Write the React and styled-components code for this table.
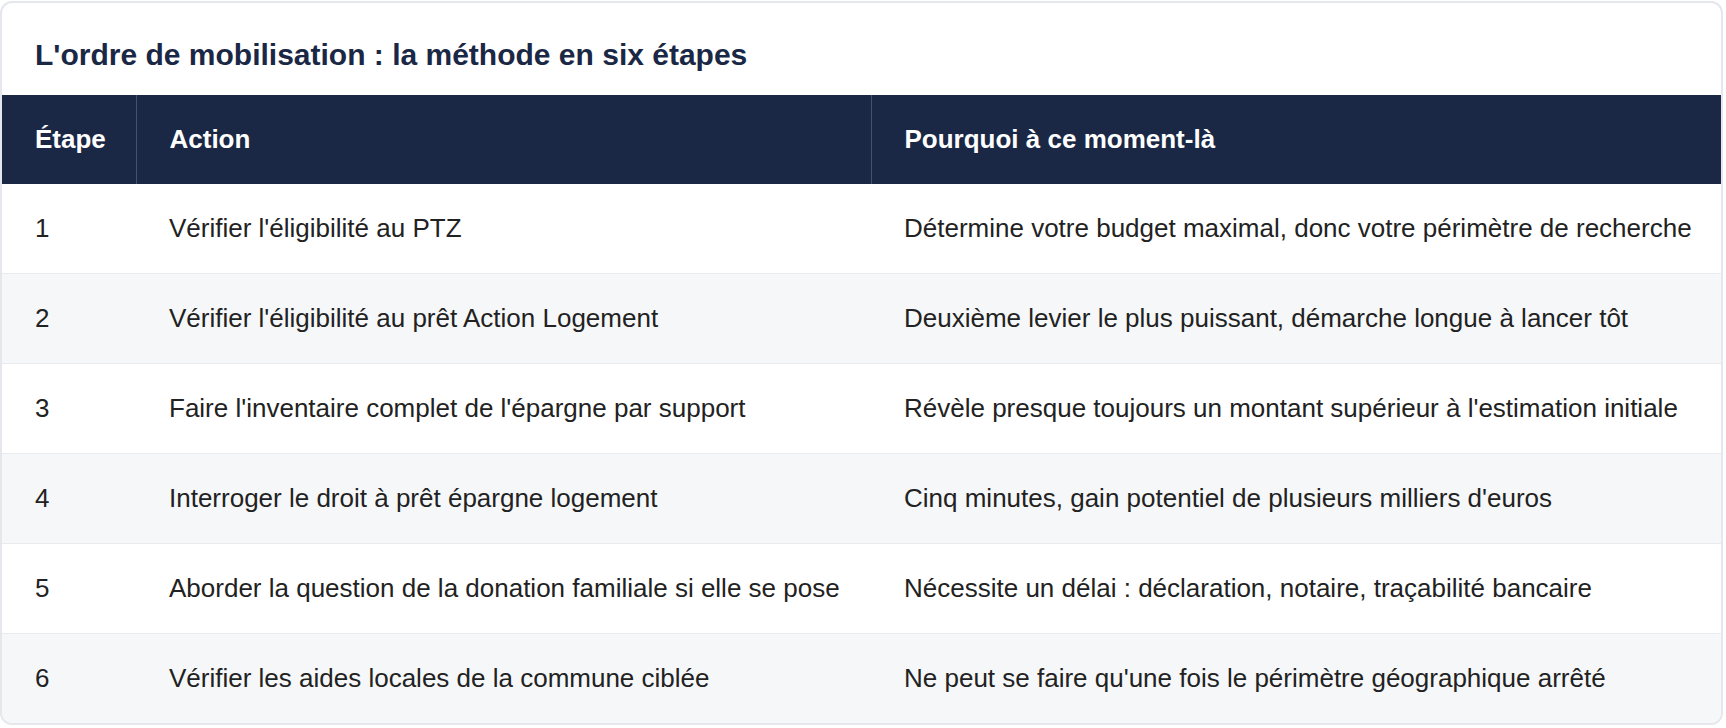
import styled, { createGlobalStyle } from "styled-components";

const GlobalStyle = createGlobalStyle`
  html, body {
    margin: 0;
    padding: 0;
    background: #ffffff;
  }
  body {
    font-family: "Liberation Sans", Arial, sans-serif;
  }
`;

const Card = styled.section`
  margin: 1px 3px 0 0;
  border: 2px solid #e4e7eb;
  border-radius: 12px;
  overflow: hidden;
  background: #fff;
`;

const Title = styled.h2`
  margin: 0;
  padding: 35px 33px 23px;
  font-size: 30px;
  line-height: 34px;
  font-weight: 700;
  color: #1b2845;
`;

const Table = styled.table`
  width: 100%;
  border-collapse: collapse;
  table-layout: fixed;
  font-size: 26px;
`;

const HeadCell = styled.th`
  box-sizing: border-box;
  width: ${(p) => p.$width || "auto"};
  background: #1b2845;
  color: #fff;
  text-align: left;
  font-weight: 700;
  padding: 29px 33px 29px;
  line-height: 31px;
  border-left: 1px solid #46526b;
  &:first-child {
    border-left: none;
  }
`;

const Row = styled.tr`
  background: ${(p) => (p.$alt ? "#f6f7f9" : "#ffffff")};
  border-top: 1px solid #e8ebef;
  &:first-child {
    border-top: none;
  }
`;

const Cell = styled.td`
  box-sizing: border-box;
  padding: 29px 33px;
  line-height: 31px;
  color: #222;
  white-space: nowrap;
`;

const steps = [
  ["1", "Vérifier l'éligibilité au PTZ", "Détermine votre budget maximal, donc votre périmètre de recherche"],
  ["2", "Vérifier l'éligibilité au prêt Action Logement", "Deuxième levier le plus puissant, démarche longue à lancer tôt"],
  ["3", "Faire l'inventaire complet de l'épargne par support", "Révèle presque toujours un montant supérieur à l'estimation initiale"],
  ["4", "Interroger le droit à prêt épargne logement", "Cinq minutes, gain potentiel de plusieurs milliers d'euros"],
  ["5", "Aborder la question de la donation familiale si elle se pose", "Nécessite un délai : déclaration, notaire, traçabilité bancaire"],
  ["6", "Vérifier les aides locales de la commune ciblée", "Ne peut se faire qu'une fois le périmètre géographique arrêté"],
];

export default function App() {
  return (
    <>
      <GlobalStyle />
      <Card>
        <Title>L'ordre de mobilisation : la méthode en six étapes</Title>
        <Table>
          <thead>
            <tr>
              <HeadCell $width="134px">Étape</HeadCell>
              <HeadCell $width="735px">Action</HeadCell>
              <HeadCell>Pourquoi à ce moment-là</HeadCell>
            </tr>
          </thead>
          <tbody>
            {steps.map(([n, action, why], i) => (
              <Row key={n} $alt={i % 2 === 1}>
                <Cell>{n}</Cell>
                <Cell>{action}</Cell>
                <Cell>{why}</Cell>
              </Row>
            ))}
          </tbody>
        </Table>
      </Card>
    </>
  );
}
